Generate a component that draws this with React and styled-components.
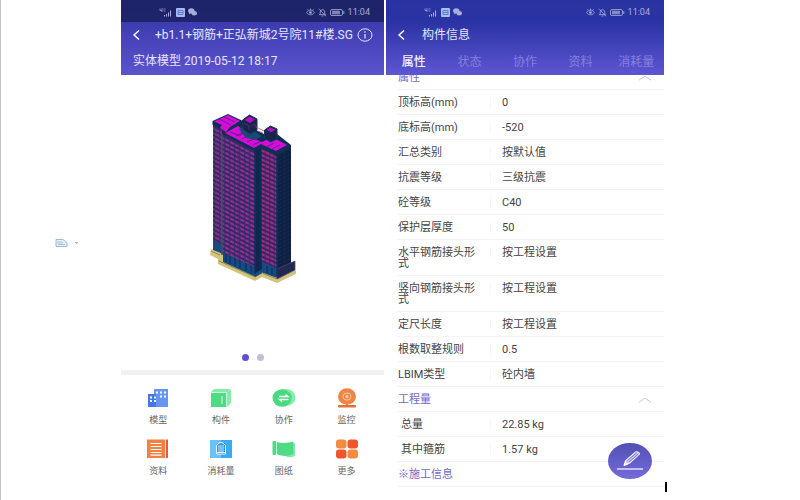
import React, { useState } from 'react';
import styled, { createGlobalStyle } from 'styled-components';

const GlobalStyle = createGlobalStyle`
    * {
        box-sizing: border-box;
    }
    body {
        margin: 0;
        background: #fff;
        color: #444;
        font-family: Roboto, 'Noto Sans CJK SC', sans-serif;
    }
    button {
        padding: 0;
        border: none;
        background: none;
        color: inherit;
        font: inherit;
        cursor: pointer;
    }
    svg {
        display: block;
        flex: none;
    }
`;

const Page = styled.div`
    display: grid;
    grid-template-columns: 120fr 263fr 280fr 136fr;
    min-height: 100vh;
    border-left: 1px solid #c4c4c4;
`;

const Gutter = styled.div`
    display: flex;
    justify-content: flex-end;
    align-items: flex-start;
    padding: 238px 42px 0 0;
`;

const PasteButton = styled.button`
    display: flex;
    align-items: center;
    gap: 6px;
`;

const CaretArea = styled.div`
    display: flex;
    align-items: flex-end;
    padding: 0 1px 8px;
`;

const Caret = styled.span`
    width: 2px;
    height: 10px;
    background: #000;
`;

const Phone = styled.section`
    position: relative;
    min-width: 0;
    margin-left: ${(props) => (props.$spaced ? '2px' : '0')};
    background: #fff;
`;

const Header = styled.header`
    position: relative;
    color: #e6e5fa;
    background: ${(props) =>
        props.$dark
            ? 'linear-gradient(#1e2468 0, #20246c 22px, #3d3bb0 22px, #5c54cd 75px)'
            : 'linear-gradient(#2833a0 0, #2a33a4 22px, #5e56d2 75px)'};
`;

const StatusBar = styled.div`
    display: flex;
    align-items: center;
    justify-content: space-between;
    height: 22px;
    padding: 2px 14px 0 38px;
    color: #a9add9;
    font-size: 9px;
    line-height: 12px;
`;

const StatusGroup = styled.div`
    display: flex;
    align-items: center;
    gap: 3px;
`;

const NavBar = styled.div`
    display: flex;
    align-items: center;
    height: 25px;
    padding: 0 11px;
`;

const NavTitle = styled.h1`
    flex: 1;
    margin: 0;
    padding-left: ${(props) => (props.$wide ? '14px' : '16px')};
    font-size: 12px;
    line-height: 16px;
    font-weight: 400;
    white-space: nowrap;
`;

const SubTitle = styled.p`
    margin: 0;
    padding: 1px 12px 0;
    font-size: 12px;
    line-height: 27px;
`;

const Tabs = styled.nav`
    display: grid;
    grid-template-columns: repeat(5, 1fr);
    height: 28px;
    padding-top: 1px;
`;

const Tab = styled.button`
    font-size: 12px;
    line-height: 16px;
    white-space: nowrap;
    font-weight: ${(props) => (props.$active ? 500 : 400)};
    color: ${(props) => (props.$active ? '#f4f3ff' : '#8580dc')};
`;

const Viewer = styled.div`
    display: flex;
    flex-direction: column;
    align-items: center;
    gap: 69px;
    padding: 36px 0 9px;
    border-bottom: 5px solid #f1f1f1;
`;

const Dots = styled.div`
    display: flex;
    gap: 8px;
`;

const Dot = styled.button`
    width: 7px;
    height: 7px;
    border-radius: 50%;
    background: ${(props) => (props.$active ? '#5b53cf' : '#c0bedd')};
`;

const Menu = styled.div`
    display: grid;
    grid-template-columns: repeat(4, 1fr);
    row-gap: 13px;
    padding: 13px 6px;
`;

const MenuItem = styled.button`
    display: flex;
    flex-direction: column;
    align-items: center;
    gap: 6px;
    color: #666;
    font-size: 9px;
    line-height: 12px;
`;

const Scroller = styled.div`
    overflow: hidden;
`;

const Sheet = styled.table`
    width: calc(100% - 11px);
    margin: -10px 0 0 11px;
    border-collapse: separate;
    border-spacing: 0;
    table-layout: fixed;
    font-size: 11px;
    line-height: 11px;
`;

const LabelCol = styled.col`
    width: 93px;
`;

const LabelCell = styled.th`
    padding: 7px 13px 6px ${(props) => (props.$indent ? '4px' : '1px')};
    border-bottom: 1px solid #f4f4f4;
    text-align: left;
    vertical-align: top;
    font-weight: 400;
`;

const ValueCell = styled.td`
    padding: 7px 0 6px;
    border-bottom: 1px solid #f4f4f4;
    vertical-align: top;
`;

const Value = styled.div`
    padding-left: 11px;
    border-left: 1px solid #f6f6f6;
`;

const SectionCell = styled.th`
    padding: 7px 12px 6px 1px;
    border-bottom: 1px solid #f4f4f4;
    font-weight: 400;
    color: #6f69c8;
`;

const SectionButton = styled.button`
    display: flex;
    align-items: center;
    justify-content: space-between;
    width: 100%;
    height: 11px;
`;

const EditButton = styled.button`
    position: absolute;
    right: 12px;
    bottom: 21px;
    display: flex;
    align-items: center;
    justify-content: center;
    width: 44px;
    height: 36px;
    border-radius: 50%;
    background: linear-gradient(#5350b4, #746bdc);
`;

const PasteIcon = () => (
    <svg width="13" height="10" viewBox="0 0 13 10" fill="none" stroke="#9db9da">
        <path d="M1 1.5h7l4 3v4H1z" fill="#e8f0f8" />
        <path d="M3 3v3M5 3v3M7 3v3M3 6.5h7" strokeWidth="0.8" />
    </svg>
);

const SmallArrow = () => (
    <svg width="5" height="4" viewBox="0 0 5 4">
        <path d="M0.5 1h4l-2 2z" fill="#a5afba" />
    </svg>
);

const SignalIcon = () => (
    <svg width="14" height="9" viewBox="0 0 14 9" fill="none" stroke="currentColor">
        <path d="M1 0.5v2h2M3 0v4M4.5 1h2M4.5 3h2" strokeWidth="0.7" />
        <path d="M5.500 8.500V7M7.500 8.500V6M9.500 8.500V4.500M11.500 8.500V2.500" strokeWidth="1" />
    </svg>
);

const AppIcon = () => (
    <svg width="9" height="9" viewBox="0 0 9 9">
        <rect width="9" height="9" rx="1" fill="#a9bcf0" />
        <path d="M2 2.500h5v4H2zM2 4.500h5" fill="none" stroke="#5f7bd2" strokeWidth="1" />
    </svg>
);

const ChatIcon = () => (
    <svg width="9" height="8" viewBox="0 0 9 8" fill="currentColor">
        <ellipse cx="3.300" cy="2.800" rx="3.200" ry="2.600" />
        <path d="M1.200 4.500L1 6.200l2-1z" />
        <ellipse cx="6.200" cy="5.200" rx="2.700" ry="2.200" />
    </svg>
);

const EyeIcon = () => (
    <svg width="9" height="9" viewBox="0 0 9 9" fill="none" stroke="currentColor">
        <path d="M0.500 4.500c2-3 6-3 8 0-2 3-6 3-8 0zM4.500 0.500v1.500M1.500 1.200l1 1.200M7.500 1.200l-1 1.200" strokeWidth="0.8" />
        <circle cx="4.500" cy="4.500" r="1.300" fill="currentColor" stroke="none" />
    </svg>
);

const BellOffIcon = () => (
    <svg width="9" height="9" viewBox="0 0 9 9" fill="none" stroke="currentColor" strokeWidth="0.8">
        <path d="M2.200 6.500V4c0-3 4.600-3 4.600 0v2.500M1 6.700h7M3.700 8h1.600M1 0.800l7 7.500" />
    </svg>
);

const BatteryIcon = () => (
    <svg width="15" height="7" viewBox="0 0 15 7">
        <rect x="0.500" y="0.500" width="12" height="6" rx="1.500" fill="none" stroke="currentColor" strokeWidth="0.8" />
        <rect x="2" y="1.700" width="8" height="3.600" fill="currentColor" opacity="0.7" />
        <path d="M13.800 2.200v2.600" stroke="currentColor" />
    </svg>
);

const BackIcon = () => (
    <svg width="9" height="12" viewBox="0 0 9 12" fill="none" stroke="#fff" strokeWidth="1.400">
        <path d="M7 1.500L2 6l5 4.500" />
    </svg>
);

const InfoIcon = () => (
    <svg width="16" height="14" viewBox="0 0 16 14" fill="none" stroke="#e6e5fa">
        <ellipse cx="8" cy="7" rx="7" ry="6.200" />
        <path d="M8 3.300v1.400M8 6v4.500" strokeWidth="1.200" />
    </svg>
);

const ChevronUp = () => (
    <svg width="14" height="6" viewBox="0 0 14 6" fill="none" stroke="#c9c9d0">
        <path d="M1 5.200l6-4 6 4" />
    </svg>
);

const PenIcon = () => (
    <svg width="28" height="22" viewBox="0 0 28 22" fill="none" stroke="#fff">
        <path d="M8 15.500l1.500-5L19.500 2q2.500-1.200 4.500 1.700L14 13z" fill="#c9c5f3" strokeWidth="1" strokeLinejoin="round" />
        <path d="M11.500 10.500l9.500-8M13 12l9.500-8" stroke="#6761c4" strokeWidth="0.8" />
        <path d="M8 15.500l1-3 2.500 1.800z" fill="#fff" strokeWidth="0.6" />
        <path d="M1 19h26" strokeWidth="1.200" />
    </svg>
);

const Building = () => (
    <svg width="92" height="174" viewBox="207 111 92 174" role="img" aria-label="模型">
        <defs>
            <pattern id="floorsA" width="5" height="4.500" patternUnits="userSpaceOnUse" patternTransform="skewY(28)">
                <rect width="5" height="4.500" fill="#38296b" />
                <rect x="0.400" y="0.300" width="4" height="2.200" fill="#8b2f98" />
                <rect x="0.400" y="1.800" width="2" height="0.900" fill="#a8357f" />
                <rect x="0.400" y="3.600" width="4" height="0.600" fill="#27204e" />
            </pattern>
            <pattern id="floorsB" width="4.500" height="4.500" patternUnits="userSpaceOnUse" patternTransform="skewY(25)">
                <rect width="4.500" height="4.500" fill="#3b2868" />
                <rect x="0.300" y="0.400" width="3.500" height="2.200" fill="#a32d86" />
                <rect x="0.300" y="3.600" width="3.500" height="0.600" fill="#27204e" />
            </pattern>
            <pattern id="floorsC" width="5" height="4" patternUnits="userSpaceOnUse" patternTransform="skewY(-28)">
                <rect width="5" height="4" fill="#0d2146" />
                <rect y="0.500" width="5" height="0.600" fill="#193153" />
                <rect x="1.500" width="0.700" height="4" fill="#0a1838" />
            </pattern>
        </defs>
        <path d="M211 249l12 5v6l32 15 8-4 14 7 19-8v4l-19 9-15-6-7 4-37-17v-5l-8-4z" fill="#d3c47c" />
        <path d="M211 251l9 4M219 261l36 16 7-4 15 6" stroke="#8a7b40" strokeWidth="0.8" fill="none" />
        <path d="M213 238l10 4v12l-10-4zM223 250l33 14v13l-33-15zM255 264l7-3v12l-7 4zM261 260l16 6v12l-16-6z" fill="#164a83" />
        <path d="M226 254v8M230 256v8M235 258v8M240 260v8M246 263v8M251 265v8M267 266v7M272 268v7" stroke="#0c2851" />
        <path d="M213 121l10 6v118l-10-5z" fill="url(#floorsA)" />
        <path d="M222 131l33 18v118l-33-15z" fill="url(#floorsA)" />
        <path d="M255 149l7-4v124l-7 4z" fill="#10264d" />
        <path d="M261 145l16 9v114l-16-6z" fill="url(#floorsB)" />
        <path d="M277 154l14-8v117l-14 9z" fill="url(#floorsC)" />
        <path d="M277 269l18-8v9l-18 9z" fill="#222951" stroke="#4a426f" strokeWidth="0.700" />
        <path d="M217 125v119M238 140v119M249 146v118" stroke="#2b3c6b" strokeWidth="0.800" opacity="0.700" />
        <path d="M222 128v127" stroke="#3f4f6b" strokeWidth="1.600" />
        <path d="M255 149v125M261 146v122M277 154v122" stroke="#123156" strokeWidth="1.400" />
        <path d="M212.500 121l15.500-7 15 7 13 9 8 4 8-4 19 15v3l-14 8-15-8-7 4-33-18v-4l-9.500-5z" fill="#0f2e50" />
        <path d="M214 121.500l14-6.500 12 6-10 6-4 5-6-4 2-3zM225 133l13-7 4 3 5 6 8 4 7 3 10-5 15 8-11 6-15-7-7 4z" fill="#d20edb" />
        <path d="M219 119l12 6M224 117l11 5M230 132l10 4 3-3M236 136l9-5M242 139l8-4M247 142l9-4M253 145l8-4M266 147l8-4M272 149l8-4" stroke="#6d1388" strokeWidth="0.900" fill="none" />
        <path d="M239 129l6-3 17 10-6 4-10-2z" fill="#164b73" />
        <path d="M242.500 120l7-5 7.500 4v11l-7 4-7-5z" fill="#18244c" stroke="#12385b" />
        <path d="M244.500 120l5-3.500 5.500 3-5 3.500z" fill="#b010c0" />
        <path d="M244 123l5 3v4M251 126l4-2v4" stroke="#5a2478" fill="none" />
        <path d="M264.500 130l6-4 6.500 3v10l-6.500 3-6-4z" fill="#18244c" stroke="#12385b" />
        <path d="M266.500 130l4-2.500 5 2.200-4.500 2.500z" fill="#b010c0" />
        <path d="M256 127l8 4M258 131l5 2" stroke="#d84478" strokeWidth="0.800" />
    </svg>
);

const ICONS = {
    model: (
        <>
            <path d="M8 1h14v18H8z" fill="#6795f4" />
            <path d="M2 6h8v13H2z" fill="#4677e6" />
            <path d="M10 3.500h2v2h-2zM14 3.500h2v2h-2zM18 3.500h2v2h-2zM14 7.500h2v2h-2zM18 7.500h2v2h-2zM4 8.500h2v2H4zM8 8.500h2v2H8zM4 12h2v2H4zM8 12h2v2H8z" fill="#fff" />
        </>
    ),
    component: (
        <>
            <path d="M2 4l3-3h15q2 0 2 2v12l-4 4H2z" fill="#86ecab" />
            <path d="M2 5h15v14H3q-1 0-1-1z" fill="#4ddb83" />
            <path d="M2 4.500h15.500V19M13 8v8" stroke="#d9fae5" strokeWidth="0.900" fill="none" />
        </>
    ),
    teamwork: (
        <>
            <ellipse cx="14" cy="9.500" rx="9.500" ry="8.500" fill="#86ecab" />
            <ellipse cx="10" cy="10" rx="9.500" ry="8.700" fill="#48d981" />
            <path d="M7 8.500h9l-2.500-2M16.500 11.500h-9l2.500 2" stroke="#fff" strokeWidth="1.400" fill="none" />
        </>
    ),
    monitor: (
        <>
            <ellipse cx="12" cy="8.500" rx="9" ry="8.200" fill="#ef8445" />
            <path d="M11 16h2v2h-2z" fill="#ef8445" />
            <rect x="3" y="17" width="18" height="2.500" rx="0.800" fill="#e66f35" />
            <ellipse cx="12" cy="8.500" rx="4" ry="3.600" fill="none" stroke="#fbd0b4" strokeWidth="0.900" />
            <circle cx="12" cy="8.500" r="1.500" fill="#fbd0b4" />
        </>
    ),
    document: (
        <>
            <path d="M1 0.500h18v18.500H1z" fill="#f08344" />
            <path d="M19.800 0.500H22V19h-2.200z" fill="#e95b32" />
            <path d="M4.500 4.500h11M4.500 7.500h11M4.500 10.500h11M4.500 13.500h11M4.500 16.200h11" stroke="#fff" strokeWidth="1.200" />
        </>
    ),
    usage: (
        <>
            <path d="M1 1h22v18H1z" fill="#69c2fb" />
            <path d="M12 1h11v18H12z" fill="#3caaf1" />
            <path d="M7.500 15V7q0-1.500 2-2 0-1.500 2.500-1.500T14.500 5q2 .5 2 2v8z" fill="#2795df" stroke="#fff" strokeWidth="0.900" />
            <path d="M10 6v7.500M14 6v7.500M12 6v7.500M7.500 13.500h9" stroke="#fff" strokeWidth="0.800" />
        </>
    ),
    drawing: (
        <>
            <path d="M5 5q8 3 18-1v13q-4 2-8 1z" fill="#86ecab" />
            <rect x="0.500" y="2" width="3.500" height="14" rx="1" fill="#4ddb83" />
            <path d="M4.500 3q8 2 17-.5V15q-8 3.500-16 .5Q4 13 4.500 3z" fill="#4ddb83" />
            <path d="M4.500 2.500v12.500" stroke="#c9f7da" strokeWidth="0.800" />
        </>
    ),
    more: (
        <>
            <rect x="1" y="0.500" width="10.500" height="9" rx="3" fill="#f38a3d" />
            <rect x="12.500" y="0.500" width="10.500" height="9" rx="3" fill="#f0552e" />
            <rect x="1" y="10.500" width="10.500" height="9" rx="3" fill="#f0552e" />
            <rect x="12.500" y="10.500" width="10.500" height="9" rx="3" fill="#f38a3d" />
        </>
    ),
};

const menuItems = [
    { icon: 'model', label: '模型' },
    { icon: 'component', label: '构件' },
    { icon: 'teamwork', label: '协作' },
    { icon: 'monitor', label: '监控' },
    { icon: 'document', label: '资料' },
    { icon: 'usage', label: '消耗量' },
    { icon: 'drawing', label: '图纸' },
    { icon: 'more', label: '更多' },
];

const tabs = ['属性', '状态', '协作', '资料', '消耗量'];

const properties = [
    ['顶标高(mm)', '0'],
    ['底标高(mm)', '-520'],
    ['汇总类别', '按默认值'],
    ['抗震等级', '三级抗震'],
    ['砼等级', 'C40'],
    ['保护层厚度', '50'],
    ['水平钢筋接头形式', '按工程设置'],
    ['竖向钢筋接头形式', '按工程设置'],
    ['定尺长度', '按工程设置'],
    ['根数取整规则', '0.5'],
    ['LBIM类型', '砼内墙'],
];

const quantities = [
    ['总量', '22.85 kg'],
    ['其中箍筋', '1.57 kg'],
];

const Status = () => (
    <StatusBar>
        <StatusGroup>
            <SignalIcon />
            <AppIcon />
            <ChatIcon />
        </StatusGroup>
        <StatusGroup>
            <EyeIcon />
            <BellOffIcon />
            <BatteryIcon />
            11:04
        </StatusGroup>
    </StatusBar>
);

const Section = ({ title, rows, indent, collapsible }) => {
    const [open, setOpen] = useState(true);

    return (
        <tbody>
            <tr>
                <SectionCell colSpan={2}>
                    <SectionButton onClick={() => setOpen(!open)}>
                        {title}
                        {collapsible && <ChevronUp />}
                    </SectionButton>
                </SectionCell>
            </tr>
            {open && rows.map(([label, value]) => (
                <tr key={label}>
                    <LabelCell scope="row" $indent={indent}>{label}</LabelCell>
                    <ValueCell>
                        <Value>{value}</Value>
                    </ValueCell>
                </tr>
            ))}
        </tbody>
    );
};

const ModelScreen = () => {
    const [slide, setSlide] = useState(0);

    return (
        <Phone>
            <Header $dark>
                <Status />
                <NavBar>
                    <button aria-label="返回"><BackIcon /></button>
                    <NavTitle $wide>+b1.1+钢筋+正弘新城2号院11#楼.SG</NavTitle>
                    <button aria-label="信息"><InfoIcon /></button>
                </NavBar>
                <SubTitle>实体模型 2019-05-12 18:17</SubTitle>
            </Header>
            <Viewer>
                <Building />
                <Dots>
                    {[0, 1].map((n) => (
                        <Dot key={n} aria-label={`${n + 1}`} $active={slide === n} onClick={() => setSlide(n)} />
                    ))}
                </Dots>
            </Viewer>
            <Menu>
                {menuItems.map((item) => (
                    <MenuItem key={item.label}>
                        <svg width="24" height="20" viewBox="0 0 24 20">{ICONS[item.icon]}</svg>
                        {item.label}
                    </MenuItem>
                ))}
            </Menu>
        </Phone>
    );
};

const ComponentScreen = () => {
    const [active, setActive] = useState('属性');

    return (
        <Phone $spaced>
            <Header>
                <Status />
                <NavBar>
                    <button aria-label="返回"><BackIcon /></button>
                    <NavTitle>构件信息</NavTitle>
                </NavBar>
                <Tabs>
                    {tabs.map((tab) => (
                        <Tab key={tab} $active={tab === active} onClick={() => setActive(tab)}>{tab}</Tab>
                    ))}
                </Tabs>
            </Header>
            <Scroller>
                <Sheet>
                    <colgroup>
                        <LabelCol />
                        <col />
                    </colgroup>
                    <Section title="属性" rows={properties} collapsible />
                    <Section title="工程量" rows={quantities} indent collapsible />
                    <Section title="※施工信息" rows={[]} />
                </Sheet>
            </Scroller>
            <EditButton aria-label="编辑"><PenIcon /></EditButton>
        </Phone>
    );
};

const App = () => (
    <>
        <GlobalStyle />
        <Page>
            <Gutter>
                <PasteButton aria-label="粘贴选项">
                    <PasteIcon />
                    <SmallArrow />
                </PasteButton>
            </Gutter>
            <ModelScreen />
            <ComponentScreen />
            <CaretArea>
                <Caret />
            </CaretArea>
        </Page>
    </>
);

export default App;
